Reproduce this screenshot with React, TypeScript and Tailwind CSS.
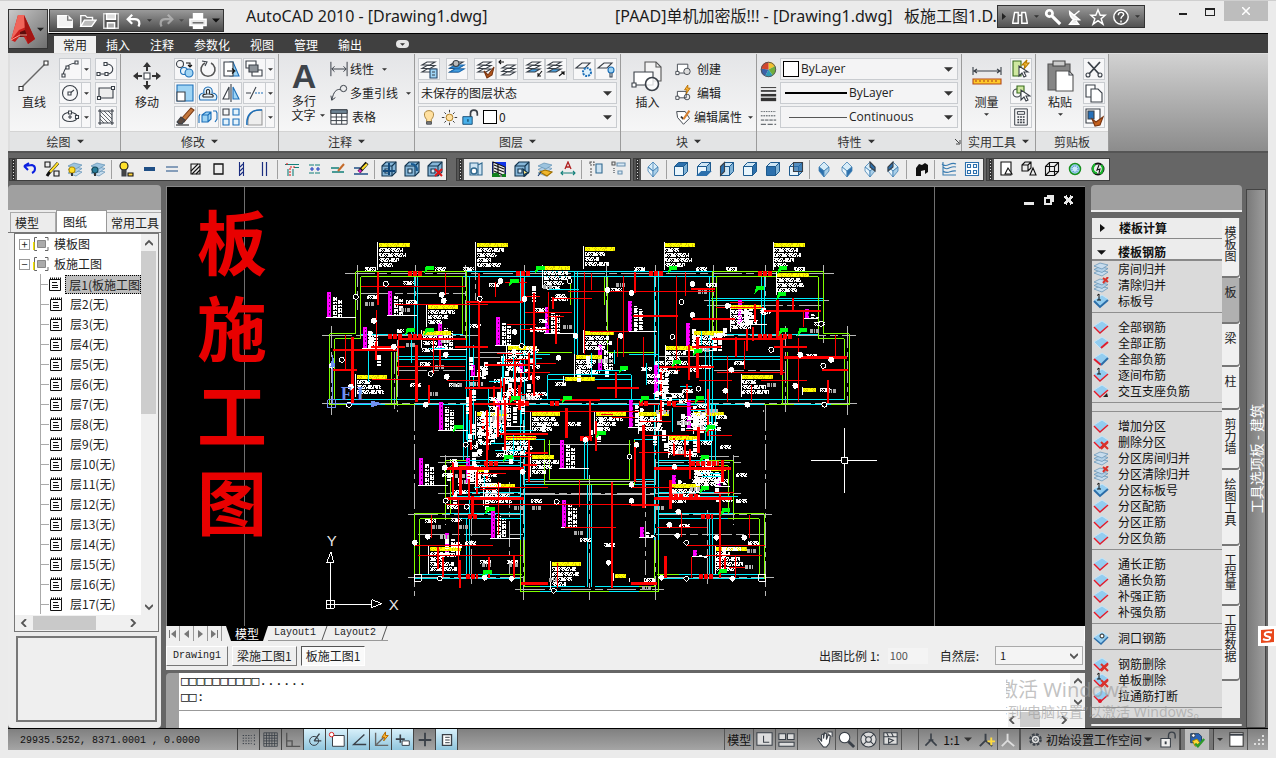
import React from "react";

type Kids = { children?: React.ReactNode };

/* ---------- shared primitives ---------- */

const Ic = ({ s = 20, v = 20, children }: Kids & { s?: number; v?: number }) => (
  <svg width={s} height={s} viewBox={`0 0 ${v} ${v}`} fill="none" stroke="#3a4048" strokeWidth="1.1" className="shrink-0" aria-hidden="true">
    {children}
  </svg>
);

const Caret = ({ w = 9, color = "#333" }: { w?: number; color?: string }) => (
  <svg width={w} height="5" viewBox="0 0 10 5" className="pointer-events-none shrink-0" aria-hidden="true">
    <path d="M0 0h10L5 5z" fill={color} />
  </svg>
);

const Small = ({ label, children, caret }: Kids & { label: string; caret?: boolean }) => (
  <button aria-label={label} className="flex h-[22px] min-w-[22px] items-center justify-center border border-[#c9ccd0] bg-[#f7f7f8]">
    {children}
    {caret && (
      <span className="ml-px flex h-full w-[10px] items-center justify-center border-l border-[#c9ccd0]">
        <Caret w={5} />
      </span>
    )}
  </button>
);

const Big = ({ label, children, caret }: Kids & { label: string; caret?: boolean }) => (
  <button className="flex w-12 flex-col items-center text-[12px] leading-[15px]">
    <span className="flex h-9 items-center">{children}</span>
    <span>{label}</span>
    {caret && <span className="flex h-2 items-end"><Caret w={5} /></span>}
  </button>
);

const Panel = ({ title, children, width, caret = true, corner }: Kids & { title: string; width: string; caret?: boolean; corner?: boolean }) => (
  <section className={`${width} flex shrink-0 flex-col border-r border-[#9b9b9b] bg-gradient-to-b from-[#e4e5e7] to-[#fbfbfb]`}>
    <div className="flex h-[78px] gap-1 px-[3px] pt-1">{children}</div>
    <div className="flex h-5 items-center justify-center gap-1.5 border-t border-[#d4d4d4] bg-[#e3e4e5] text-[12px] text-[#333]">
      <span>{title}</span>
      {caret && <Caret w={7} />}
      {corner && <svg width="6" height="6" viewBox="0 0 6 6" stroke="#444" fill="none" className="-mr-20 ml-[74px]"><path d="M0 0l4 4M5 1v4H1" /></svg>}
    </div>
  </section>
);

const Combo = ({ label, value, children }: Kids & { label: string; value: string }) => (
  <div className="flex h-[22px] w-full items-center border border-[#c9ccd0] bg-[#f4f4f5] pr-1">
    {children}
    <select aria-label={label} defaultValue={value} className="min-w-0 flex-1 appearance-none bg-transparent pl-0.5 text-[12px] text-[#222] outline-none">
      <option>{value}</option>
    </select>
    <Caret w={9} />
  </div>
);

/* ---------- ribbon icons ---------- */

const B = "#1c6fb8";
const L = "#9fd4f4";

const Layers = ({ accent = "#fff" }: { accent?: string }) => (
  <>
    <path d="M3 13l5-3h8l-5 3z" fill={accent} />
    <path d="M3 9.500l5-3h8l-5 3z" fill="#fff" />
    <path d="M3 6l5-3h8l-5 3z" fill="#fff" />
  </>
);

function DrawPanel() {
  return (
    <Panel title="绘图" width="w-[111px]">
      <Big label="直线">
        <Ic s={32} v={32}><path d="M3 28L28 3" strokeWidth="1.500" stroke="#666" /><path d="M1 26.500h4v4H1zM26 1h4v4h-4z" fill="#fff" stroke="#333" /></Ic>
      </Big>
      <div className="grid grid-cols-[32px_22px] content-start gap-x-1 gap-y-0.5">
        <Small label="圆弧" caret><Ic s={20}><path d="M3 17C4 9 9 4 17 4" /><path d="M2 15h3v3H2zM6 7h3v3H6zM15 2h3v3h-3z" fill="#fff" /></Ic></Small>
        <Small label="多段线"><Ic><path d="M3 15h7M9 5c10-1 10 10 2 10" /><path d="M1 13.500h3v3H1zM9 13.500h3v3H9zM8 3.500h3v3H8z" fill="#fff" /></Ic></Small>
        <Small label="圆" caret><Ic><circle cx="10" cy="10" r="7.500" /><path d="M9 11l5-4" /><path d="M8 9h3v3H8z" fill="#fff" /></Ic></Small>
        <Small label="矩形"><Ic><path d="M3 5h14v10H3z" fill="#eee" /><path d="M1.500 13.500h3v3h-3zM15.500 3.500h3v3h-3z" fill="#fff" /></Ic></Small>
        <Small label="椭圆" caret><Ic><ellipse cx="10" cy="10" rx="7.500" ry="4.500" /><path d="M8 10h4M10 8v4" /><path d="M15.500 8.500h3v3h-3zM8.500 4h3v3h-3z" fill="#fff" /></Ic></Small>
        <Small label="图案填充"><Ic><path d="M4 2v16M16 2v16M2 4h16M2 16h16" /><path d="M4 8l8 8M4 12l4 4M4 4l12 12M8 4l8 8M12 4l4 4" strokeWidth=".8" /></Ic></Small>
      </div>
    </Panel>
  );
}

function ModifyPanel() {
  return (
    <Panel title="修改" width="w-[158px]">
      <Big label="移动">
        <Ic s={30} v={30}>
          <path d="M12 12h6v6h-6z" fill="#fff" />
          <path d="M15 1l4 5h-3v4h-2V6h-3zM15 29l4-5h-3v-4h-2v4h-3zM1 15l5-4v3h4v2H6v3zM29 15l-5-4v3h-4v2h4v3z" fill="#333" stroke="none" />
        </Ic>
      </Big>
      <div className="grid grid-cols-[22px_22px_22px_32px] content-start gap-x-px gap-y-0.5">
        <Small label="复制"><Ic><circle cx="5" cy="5" r="3.500" /><circle cx="9" cy="12" r="3.500" fill="#e4f3fc" stroke={B} /><circle cx="14" cy="14" r="4" fill={L} stroke={B} /><path d="M11 4h4v4M13 6l2 2 2-2" stroke="#111" /></Ic></Small>
        <Small label="旋转"><Ic><path d="M7 4a7 7 0 1 0 6 0" strokeWidth="1.600" stroke="#555" /><path d="M4 2l5 1-2 4" /></Ic></Small>
        <Small label="拉伸"><Ic><path d="M12 3l6 14H9V3z" fill={L} stroke={B} /><path d="M3 3h9v14H3z" fill="#fff" /><path d="M6 12h7M11 9.500l3 2.500-3 2.500" stroke="#111" /></Ic></Small>
        <Small label="前置" caret><Ic><path d="M2 2h10v7H2z" fill="#fff" /><path d="M8 11h10v6H8z" fill="#fff" /><path d="M5 6h9v7H5z" fill="#8d9399" /></Ic></Small>
        <Small label="缩放"><Ic><path d="M2 2h16v16H2z" fill={L} stroke={B} /><path d="M2 9h8v9H2z" fill="#fff" /></Ic></Small>
        <Small label="偏移"><Ic><path d="M2 17h16M2 17c-2-5 1-7 4-7-2-8 10-8 8 0 4 0 6 3 4 7z" stroke={B} fill="#e4f3fc" /><path d="M5 14h10M5 14c-1-3 2-3 4-3-3-6 5-6 2 0 3 0 5 1 4 3" stroke="#222" /></Ic></Small>
        <Small label="镜像"><Ic><path d="M8 4v12H2z" fill="#fff" /><path d="M12 4v12h6z" fill={L} stroke={B} /><path d="M10 1v18" /></Ic></Small>
        <Small label="修剪" caret><Ic><path d="M2 10h5M12 4L6 16" /><path d="M11 10h8" stroke={B} strokeDasharray="2 1" /></Ic></Small>
        <Small label="删除"><Ic><path d="M1 18h13" stroke="#222" /><path d="M6 12L16 1l3 2-10 12z" fill="#c4773c" stroke="#7a3b15" /><path d="M2 15l4-5 4 3-3 4H4z" fill="#5b4a40" /></Ic></Small>
        <Small label="分解"><Ic><path d="M4 8l4-3h5v7l-3 3H4zM4 8h6v7M10 8l3-3" fill={L} stroke={B} /><path d="M2 7l-1 2v7M15 4h3l1 2v6l-2 3" stroke={B} /></Ic></Small>
        <Small label="阵列"><Ic><path d="M2 2h6v6H2z" /><path d="M12 2h6v6h-6zM2 12h6v6H2zM12 12h6v6h-6z" stroke={B} fill="#e4f3fc" /></Ic></Small>
        <Small label="圆角" caret><Ic><path d="M4 18V14C4 8 8 3 15 3h3v15z" fill="#eee" stroke="#999" /><path d="M3 18C2 8 8 2 18 3" stroke={B} strokeWidth="1.500" /></Ic></Small>
      </div>
    </Panel>
  );
}

function AnnotatePanel() {
  return (
    <Panel title="注释" width="w-[136px]">
      <button className="flex w-11 flex-col items-center text-[12px] leading-[14px]">
        <span className="h-9 font-['Liberation_Sans',sans-serif] text-[34px] font-bold leading-9 text-[#3d434a]" aria-hidden="true">A</span>
        <span>多行</span>
        <span className="flex items-center gap-1 pl-2">文字<Caret w={5} /></span>
      </button>
      <div className="flex flex-1 flex-col gap-0.5 whitespace-nowrap text-[12px]">
        <button className="flex h-[22px] items-center gap-0.5"><Ic s={18}><path d="M1 2v16M19 2v16M2 10h16M5 7l-3 3 3 3M15 7l3 3-3 3" /></Ic>线性<span className="pl-1.5"><Caret w={5} /></span></button>
        <button className="flex h-[22px] items-center gap-0.5"><Ic s={18}><circle cx="15" cy="5" r="3.500" /><path d="M2 18C4 8 7 6 11 6M1 13l1 5 4-3" /></Ic>多重引线<span className="pl-1.5"><Caret w={5} /></span></button>
        <button className="flex h-[22px] items-center gap-1"><Ic s={18}><path d="M1 2h18v16H1z" fill="#fff" /><path d="M1 2h18v4H1z" fill="#6d8494" /><path d="M7 6v12M13 6v12M1 10h18M1 14h18" /></Ic>表格</button>
      </div>
    </Panel>
  );
}

function LayerPanel() {
  return (
    <Panel title="图层" width="w-[206px]">
      <div className="flex w-full flex-col gap-0.5">
        <div className="flex justify-between">
          <Small label="图层特性"><Ic><Layers /><path d="M11 10h7v9h-7z" fill={L} stroke="#246" /><path d="M13 13h3M13 16h3" /></Ic></Small>
          <Small label="置为当前"><Ic><Layers accent="#49a0de" /><path d="M3 9l5-3h9l-5 3zM3 13l5-3h9l-5 3z" fill="#49a0de" stroke={B} /><circle cx="9" cy="4.500" r="3" fill="#bbb" /></Ic></Small>
          <div className="flex"><Small label="匹配"><Ic><Layers /><path d="M9 12l4 4 6-8-2 8-5 3z" fill="#b5581d" stroke="#7a3510" /></Ic></Small><Small label="上一个"><Ic><g transform="translate(2 3)"><Layers /></g><path d="M7 3H2M4 1L2 3l2 2" stroke="#111" /></Ic></Small></div>
          <div className="flex"><Small label="隔离"><Ic><Layers accent="#49a0de" /><path d="M18 12l-4 5v-3M14 17h3" stroke="#111" /></Ic></Small><Small label="取消隔离"><Ic><g transform="translate(-1 0)"><Layers accent="#49a0de" /></g><path d="M13 17l5-4h-3M18 13v3" stroke="#111" /></Ic></Small></div>
          <div className="flex"><Small label="冻结"><Ic><path d="M2 9l6-5h8l-5 5z" /><circle cx="13" cy="13" r="4" stroke={B} strokeDasharray="2 1" strokeWidth="2" fill="#dff1fc" /></Ic></Small><Small label="关闭"><Ic><path d="M2 9l6-5h8l-5 5z" /><circle cx="15" cy="11" r="3" stroke={B} fill={L} /><path d="M14 14v4h2v-4" stroke="#345" /></Ic></Small></div>
        </div>
        <Combo label="图层状态" value="未保存的图层状态" />
        <Combo label="图层" value="0">
          <span className="flex items-center gap-1 pl-0.5">
            <Ic s={16}><path d="M7 13C3 9 3 2 10 2s7 7 3 11v3H7z" fill="#ffe0a0" stroke="#a07a30" /><path d="M7 16h6v3H7z" fill="#888" /></Ic>
            <Ic s={17}><circle cx="10" cy="10" r="4" fill="#ffe0a0" stroke="#a87920" /><path d="M10 1v3M10 16v3M1 10h3M16 10h3M4 4l2 2M14 14l2 2M16 4l-2 2M4 16l2-2" stroke="#333" /></Ic>
            <Ic s={17}><path d="M1 9h11v9H1z" fill="#49b0ea" stroke="#174e78" /><path d="M10 9V5c0-5 8-5 8 0v3" strokeWidth="2" /><path d="M7 12v3" stroke="#023" /></Ic>
            <span className="h-3.5 w-3.5 border border-black bg-white" />
          </span>
        </Combo>
      </div>
    </Panel>
  );
}

function BlockPanel() {
  return (
    <Panel title="块" width="w-[136px]">
      <Big label="插入"><Ic s={32} v={32}><path d="M14 2h11l5 5v14H14z" fill="#f3f3f3" stroke="#555" /><path d="M25 2v5h5" stroke="#555" /><path d="M3 12h19v13H3z" fill="#fff" /><circle cx="21" cy="24" r="6.500" fill="#fffc" strokeWidth="1.600" /><path d="M1 23h4v4H1z" fill="#fff" /></Ic></Big>
      <div className="flex flex-col gap-0.5 whitespace-nowrap text-[12px]">
        <button className="flex h-[22px] items-center gap-1.5"><Ic s={16}><path d="M3 4h13v11H3z" fill="#fff" /><circle cx="15" cy="13" r="4" fill="#ddd" /><path d="M1 13h4v4H1z" fill="#fff" /></Ic>创建</button>
        <button className="flex h-[22px] items-center gap-1.5"><Ic s={16}><path d="M3 8h11v8H3z" fill="#fff" /><circle cx="15" cy="15" r="3.500" /><path d="M1 14h4v4H1z" fill="#fff" /><path d="M16 0l-4 6h3l-1 5 5-7h-3z" fill="#ffb733" stroke="#b36b00" /></Ic>编辑</button>
        <button className="flex h-[22px] items-center gap-0.5"><Ic s={17}><path d="M2 3l10 0 5 8-7 7-7-8z" fill="#fff" /><path d="M7 9l3 3" stroke="#333" strokeWidth="2" /><path d="M10 12l7-10" stroke="#d98332" strokeWidth="2.500" /></Ic>编辑属性<span className="pl-1"><Caret w={5} /></span></button>
      </div>
    </Panel>
  );
}

function PropertiesPanel() {
  return (
    <Panel title="特性" width="w-[205px]" corner>
      <div className="flex w-4 shrink-0 flex-col gap-0.5">
        <span className="flex h-[22px] items-center"><Ic s={17}><g stroke="none"><path d="M10 10V1a9 9 0 0 1 8 5z" fill="#f2c12e" /><path d="M10 10l8-4a9 9 0 0 1-3 11z" fill="#6fae3d" /><path d="M10 10l5 7a9 9 0 0 1-9 1z" fill="#2f9bb5" /><path d="M10 10l-4 8a9 9 0 0 1-5-9z" fill="#3a62a8" /><path d="M10 10L1 9a9 9 0 0 1 9-8z" fill="#d2452c" /></g><circle cx="10" cy="10" r="8.500" stroke="#555" /></Ic></span>
        <span className="flex h-[22px] items-center"><Ic s={17}><g stroke="#333"><path d="M1 3h18" /><path d="M1 7h18" strokeWidth="2" /><path d="M1 12h18" strokeWidth="3" /><path d="M1 17h18" strokeWidth="4" /></g></Ic></span>
        <span className="flex h-[22px] items-center"><Ic s={17}><path d="M1 3h18" strokeDasharray="1 1" /><path d="M1 8h18" strokeDasharray="2 1" /><path d="M1 13h18" strokeDasharray="4 1" /><path d="M1 18h18" strokeDasharray="6 2" /></Ic></span>
      </div>
      <div className="flex min-w-0 flex-1 flex-col gap-0.5 font-['Open_Sans','Noto_Sans',sans-serif]">
        <Combo label="颜色" value="ByLayer"><span className="ml-0.5 h-4 w-4 border border-black bg-white" /></Combo>
        <Combo label="线宽" value="ByLayer"><span className="ml-1 h-0.5 w-[62px] bg-black" /></Combo>
        <Combo label="线型" value="Continuous"><span className="ml-2 h-px w-[58px] bg-[#555]" /></Combo>
      </div>
    </Panel>
  );
}

function UtilityPanels() {
  return (
    <>
      <Panel title="实用工具" width="w-[74px]">
        <Big label="测量" caret><Ic s={30} v={30}><path d="M1 6v8M29 6v8M2 10h26M5 8l-3 2 3 2M25 8l3 2-3 2" /><path d="M1 18h28v5H1z" fill="#ffc928" stroke="#b34a1a" /><path d="M4 19v2M8 19v2M12 19v2M16 19v2M20 19v2M24 19v2" stroke="#b34a1a" /></Ic></Big>
        <div className="-ml-0.5 flex flex-col gap-0.5">
          <Small label="快速选择"><Ic><path d="M2 2h8v15H2z" fill="#cfe8a0" stroke="#386b1c" /><path d="M16 1l-5 5h3l-1 4 5-6h-3z" fill="#ffc03a" stroke="#b37a00" /><path d="M8 7v10l3-3 2 4 2-1-2-4h4z" fill="#fff" /></Ic></Small>
          <Small label="全部选择"><Ic><circle cx="6" cy="10" r="4" /><path d="M6 3h7v7H6z" fill="#cfe8a0" stroke="#386b1c" /><path d="M10 7v10l3-3 2 4 2-1-2-4h4z" fill="#fff" /></Ic></Small>
          <Small label="计算器"><Ic s={18}><path d="M3 1h14v18H3zM6 4h8v3H6z" /><path d="M6 10h8M6 13h8M6 16h8" strokeDasharray="2 1" strokeWidth="1.800" /></Ic></Small>
        </div>
      </Panel>
      <Panel title="剪贴板" width="w-[73px]" caret={false}>
        <Big label="粘贴" caret><Ic s={32} v={32}><path d="M4 4h22v26H4z" fill="#858585" stroke="#555" /><path d="M9 1h12v5H9z" fill="#ccc" stroke="#444" /><path d="M12 11h13l4 4v16H12z" fill="#fff" stroke="#555" /><path d="M25 11v4h4" /></Ic></Big>
        <div className="-ml-0.5 flex flex-col gap-0.5">
          <Small label="剪切"><Ic><path d="M4 3l11 12M16 3L5 15" strokeWidth="1.800" /><circle cx="4" cy="16" r="2" /><circle cx="16" cy="16" r="2" /></Ic></Small>
          <Small label="复制剪裁"><Ic><path d="M2 2h9v12H2z" fill="#fff" /><path d="M7 6h7l4 4v9H7z" fill="#fff" /></Ic></Small>
          <Small label="特性匹配"><Ic><path d="M2 2h14v14H2z" fill="#fff" /><path d="M4 4h6v8H4z" fill="#2670b8" /><path d="M8 12l4 3 7-5-3 8-5 1z" fill="#c4601d" stroke="#7a3510" /></Ic></Small>
        </div>
      </Panel>
    </>
  );
}

/* ---------- title bar ---------- */

const White = ({ children, s = 18 }: Kids & { s?: number }) => (
  <svg width={s} height={s} viewBox="0 0 20 20" fill="none" stroke="#fff" strokeWidth="1.600" className="shrink-0" aria-hidden="true">{children}</svg>
);

const tabs = ["常用", "插入", "注释", "参数化", "视图", "管理", "输出"];

function TitleBar() {
  return (
    <header className="flex h-[52px] shrink-0">
      <div className="w-[41px] shrink-0 bg-[linear-gradient(#ebebeb_32px,#404040_32px)] pt-2">
        <button aria-label="应用程序菜单" className="flex h-10 w-10 items-center border border-[#333] bg-gradient-to-br from-[#c9c9c9] to-[#6f6f6f]">
          <svg width="28" height="34" viewBox="0 0 28 34" aria-hidden="true">
            <path d="M9 3l6 0 11 24-7 5-4-7-5 0-4 5-4-2z" fill="#c91f1c" />
            <path d="M9 3l6 0 2 12-7 3-8 10z" fill="#f0655a" />
            <path d="M15 3l11 24-7 5-3-12z" fill="#a31513" />
            <path d="M11 20l5-2 2 6-7 1z" fill="#5d0d0c" />
            <path d="M2 28l9-5 7 0" stroke="#ff9a8a" fill="none" />
          </svg>
          <Caret w={7} color="#222" />
        </button>
      </div>
      <div className="flex min-w-0 flex-1 flex-col">
        <div className="flex h-8 items-start">
          <div className="mt-2 flex h-[23px] w-[175px] shrink-0 items-center gap-[5px] border border-[#333] bg-gradient-to-b from-[#9a9a9a] to-[#4c4c4c] px-1.5">
            <button aria-label="新建"><White><path d="M2 4h11l5 5v8H2z" fill="#f2f2f2" stroke="#fff" /><path d="M13 4v5h5" stroke="#777" /></White></button>
            <button aria-label="打开"><White><path d="M2 16V4h5l2 2h6v3" /><path d="M2 16l4-7h13l-5 7z" fill="#bbb" /></White></button>
            <button aria-label="保存"><White><path d="M2 2h16v16H2z" fill="#555" stroke="#ddd" /><path d="M5 2h10v6H5z" fill="#ddd" /><path d="M6 12h8v6H6z" fill="#aaa" /></White></button>
            <button aria-label="放弃" className="flex items-center gap-1"><White><path d="M8 3L3 8l5 5M3 8h8c5 0 6 4 4 8" strokeWidth="2.500" /></White><Caret w={5} /></button>
            <button aria-label="重做" className="flex items-center gap-1 opacity-60"><White><path d="M12 3l5 5-5 5M17 8H9c-5 0-6 4-4 8" strokeWidth="2.500" stroke="#ccc" /></White><Caret w={5} /></button>
            <button aria-label="打印"><White><path d="M5 8V2h10v6M5 14v4h10v-4" fill="#fff" /><path d="M1 8h18v7H1z" fill="#e8e8e8" /><path d="M4 12h12" stroke="#666" /></White></button>
            <button aria-label="自定义快速访问工具栏"><Caret w={8} color="#111" /></button>
          </div>
          <h1 className="ml-[22px] mt-[3px] flex min-w-0 flex-1 whitespace-nowrap font-['Noto_Sans','Noto_Sans_CJK_SC',sans-serif] text-[16px] leading-6 text-[#1c1c1c]">
            <span className="w-[369px] shrink-0">AutoCAD 2010 - [Drawing1.dwg]</span>
            <span className="w-[289px] shrink-0">[PAAD]单机加密版!!! - [Drawing1.dwg]</span>
            <span>板施工图1.D.</span>
          </h1>
          <div className="mt-1 flex h-[23px] w-[148px] shrink-0 items-center justify-between border border-[#333] bg-gradient-to-b from-[#9a9a9a] to-[#525252] px-1">
            <svg width="4" height="7" viewBox="0 0 4 7"><path d="M0 0l4 3.500L0 7z" fill="#222" /></svg>
            <button aria-label="搜索"><White><path d="M2 16l2-11h4v12H2zM12 5h4l2 11v1h-6zM8 8h4" fill="#666" /></White></button>
            <Caret w={5} />
            <button aria-label="速博"><White><circle cx="6" cy="6" r="3.500" strokeWidth="3" /><path d="M9 9l9 9" strokeWidth="3.500" /></White></button>
            <button aria-label="通讯中心"><White><path d="M4 4c0 7 4 10 11 9zM9 8l6-5M8 13l-4 5h10l-3-4" fill="#eee" /></White></button>
            <button aria-label="收藏夹"><White><path d="M10 2l2.500 6H18l-4.500 4 2 6-5.500-4-5.500 4 2-6L2 8h5.500z" /></White></button>
            <button aria-label="帮助"><White><circle cx="10" cy="10" r="8" fill="#555" /><path d="M7 8c0-4 6-4 6-1 0 2-3 2-3 5M10 14v2" /></White></button>
            <Caret w={5} />
          </div>
          <div className="flex shrink-0 items-start">
            <button aria-label="最小化" className="ml-6 flex h-5 w-7 items-center justify-center"><span className="mt-[5px] h-0.5 w-2 bg-[#222]" /></button>
            <button aria-label="最大化" className="mr-0.5 flex h-5 w-[25px] items-center justify-center"><span className="mt-px h-2 w-2.5 border border-t-2 border-[#222]" /></button>
            <button aria-label="关闭" className="flex h-5 w-11 items-center justify-center bg-[#bdbdbd]"><svg width="8" height="8" viewBox="0 0 8 8" stroke="#fff" strokeWidth="1.500"><path d="M0 0l8 8M8 0L0 8" /></svg></button>
          </div>
        </div>
        <nav className="flex h-5 items-end border-t border-black bg-[#404040] pl-[5px] text-[12px]">
          {tabs.map((t, i) => (
            <button key={t} className={i === 0 ? "h-[17px] bg-[#f0f0f0] px-[9px] leading-[14px] text-[#222]" : "h-[17px] px-2.5 leading-[14px] text-white"}>{t}</button>
          ))}
          <button aria-label="最小化功能区" className="mb-[5px] ml-6 flex h-2 w-[13px] items-center justify-center rounded-sm bg-[#e6e6e6]"><Caret w={5} /></button>
        </nav>
      </div>
    </header>
  );
}

/* ---------- tool bars ---------- */

const Cube = ({ top = "#cfe6f5", front = "#e9f5fc", side = "#7fb2d6" }: { top?: string; front?: string; side?: string }) => (
  <g stroke="#1d5a8e" strokeWidth="1"><path d="M1.500 5.500l4-4h9l-4 4z" fill={top} /><path d="M1.500 5.500h9v9h-9z" fill={front} /><path d="M10.500 5.500l4-4v9l-4 4z" fill={side} /></g>
);
const Gem = ({ a = "#e9f5fc", b = "#a9cfe8", c = "#d7ecf8" }: { a?: string; b?: string; c?: string }) => (
  <g stroke="#4282b4" strokeWidth=".8"><path d="M3 6l5-5 5 5-5 4z" fill={c} /><path d="M3 6l5 4v6l-5-6z" fill={a} /><path d="M13 6l-5 4v6l5-6z" fill={b} /></g>
);
const Stack = ({ top = "#9cc3de" }: { top?: string }) => (
  <g stroke="#5f8fb3" strokeWidth=".7"><path d="M1 12l6-3 8 2-6 4z" fill="#c7dced" /><path d="M1 8.500l6-3 8 2-6 4z" fill="#b3d0e6" /><path d="M1 5l6-3 8 2-6 4z" fill={top} /></g>
);
const BlueBox = ({ children }: Kids) => (
  <g stroke="#12344f"><path d="M1 5l4-4h10v10l-4 4H1z" fill="#86b6d8" /><path d="M1 5h10v10M11 5l4-4" /><path d="M4 8h4v4H4z" fill="#dcedf8" />{children}</g>
);

type Tool = [string, React.ReactNode] | null;
const D = "#1f4f86";

const editTools: Tool[] = [
  ["放弃", <path d="M3 5l8-1c4 1 4 6 0 8M3 5l5-3M3 5l4 4" stroke="#0a1fe0" strokeWidth="2" />],
  ["特性匹配", <><path d="M1 1h5v5H1zM10 10h5v5h-5z" stroke="#111" /><path d="M14 2L5 12l-2 3" stroke="#111" strokeWidth="3" /><path d="M14 2L6 11" stroke="#ffdf2b" strokeWidth="2" /></>],
  ["图层开", <><Stack /><circle cx="5" cy="9" r="3" fill="#ffdf2b" stroke="#b89000" /><path d="M4 12h2v3H4z" fill="#333" stroke="none" /></>],
  ["图层关", <><Stack /><circle cx="5" cy="9" r="3" fill="#2a7d9a" stroke="#134a5c" /><path d="M4 12h2v3H4z" fill="#333" stroke="none" /></>],
  null,
  ["灯", <><circle cx="6" cy="5" r="4" fill="#ffe12b" stroke="#111" /><path d="M4 9h4v6H4z" fill="#444" /><path d="M10 12h5v3h-5z" stroke="#111" fill="#ffd23a" /></>],
  ["粗线", <path d="M3 6h11v4H3z" fill={D} stroke="none" />],
  ["双线", <path d="M2 6h12M2 10h12" stroke={D} />],
  ["填充框", <><path d="M4 3h9v10H4z" stroke="#111" /><path d="M4 10l7-7M5 13l8-8M9 13l4-4" stroke="#111" /></>],
  ["框", <path d="M4 3h9v10H4z" stroke="#111" strokeWidth="1.300" />],
  ["墙", <><path d="M6.500 1v14M10.500 1v14" stroke="#1a2d80" /><path d="M7 6l3-3M7 10l3-3M7 14l3-3" stroke="#1a2d80" /></>],
  ["竖线", <path d="M6.500 1v14M10.500 1v14" stroke="#1a2d80" strokeWidth="1.200" />],
  null,
  ["梁角", <><path d="M1 3.500h14M10 6.500h5M9 8v7M4 8v7" stroke="#13807a" /><path d="M3 2v3M6 15V6h5" stroke="#e02020" strokeDasharray="2 1" /></>],
  ["梁", <><path d="M2 4h12M2 12h12" stroke="#13807a" strokeDasharray="5 1" /><path d="M5 6v4M11 6v4M3 8h4M9 8h4" stroke="#1f3fc0" /></>],
  ["绘制", <><path d="M1 7h8M2 11h12" stroke="#13807a" strokeWidth="1.300" /><path d="M14 3L8 10" stroke="#c46a2a" strokeWidth="2" /></>],
  ["擦除", <><path d="M1 7h6M1 13h14" stroke={D} strokeWidth="1.300" /><path d="M14 2L6 11" stroke="#111" strokeWidth="4" /><path d="M14 3l-5 5" stroke="#ffdf2b" strokeWidth="2" /><path d="M8 9l-2 2" stroke="#d428c0" strokeWidth="3" /></>],
  null,
  ["全部显示", <BlueBox><path d="M2 10h12M8 2v12" strokeWidth="2" stroke="#124a7c" /></BlueBox>],
  ["显示", <BlueBox><path d="M7 3c5 0 6 3 6 7" stroke="#175a91" strokeWidth="2" /></BlueBox>],
  ["删除显示", <BlueBox><path d="M8 8l7 7M15 8l-7 7" stroke="#e01818" strokeWidth="2" /></BlueBox>],
];
const blockTools: Tool[] = [
  ["块配置", <><path d="M2 2h8v12H2zM10 4l4-2v12h-4z" stroke="#31698f" fill="#cde3f2" /><circle cx="6" cy="10" r="3" stroke="#31698f" fill="#fff" strokeWidth="1.500" /></>],
  ["渲染", <><path d="M1 1h14v14H1z" fill="#1034e8" stroke="none" /><path d="M2 1l12 5v9H2z" fill="#eee" stroke="#111" /><path d="M3 4l10 4M3 7l10 4M3 10l9 4M7 3v11" stroke="#111" /><path d="M1 13c4-3 8 0 8 3H1zM11 13h4v3h-4z" fill="#12801e" stroke="none" /></>],
  ["拾取", <BlueBox><path d="M9 8l5 4-3 1-1 3z" fill="#ffe680" /></BlueBox>],
  ["图层栈", <><Stack /><path d="M3 11l5-2 7 2-5 4z" fill="#f0b62a" stroke="#a37100" /><path d="M1 15l3-4" stroke="#136" /></>],
  ["文字间距", <><path d="M5 8l3-7 3 7M6 6h4" stroke="#b02020" strokeWidth="1.300" /><path d="M1 12h14M3 10l-2 2 2 2M13 10l2 2-2 2" stroke="#13807a" /></>],
  null,
  ["复制属性", <><path d="M2 1h4v3H2zM3 7v8" stroke="#555" strokeDasharray="2 1" /><path d="M8 3h6v9H8z" stroke="#31698f" fill="#cde3f2" /></>],
  ["粘贴属性", <><path d="M1 1h3v3H1z" stroke="#555" /><path d="M6 2h8v3H6zM7 10h4v3H7z" stroke="#6a91b0" fill="#d8e8f4" /><path d="M3 7v5" strokeDasharray="1 1" /></>],
];
const K = "#2c70ad";
const viewTools: Tool[] = [
  ["视图", <><Gem /><path d="M8 1v9M8 10L3 6" stroke="#4282b4" strokeWidth=".8" /></>], null,
  ["俯视", <Cube top={K} />], ["仰视", <><Cube /><path d="M1.500 14.500l4-4h9l-4 4z" fill={K} stroke={K} /></>],
  ["左视", <><Cube front="#cfe6f5" /><path d="M1.500 5.500l4-4v9l-4 4z" fill={K} /></>], ["右视", <Cube side={K} />],
  ["前视", <Cube front={K} />], ["后视", <><Cube /><path d="M5.500 1.500h9v9h-9z" fill={K} fillOpacity=".75" /></>],
  null,
  ["西南等轴测", <Gem a={K} />], ["东南等轴测", <Gem b={K} />],
  ["东北等轴测", <><Gem /><path d="M8 1l5 5v4L8 6z" fill={K} /></>], ["西北等轴测", <><Gem /><path d="M8 1L3 6v4l5-4z" fill={K} /></>],
  null,
  ["相机", <path d="M3 15V7l3-4 3 1 3-2 3 2v7l-3 2V9l-4 1v5z" fill="#111" stroke="none" />],
  null,
  ["网格", <><path d="M2 1v13h13M1 3c5 5 8-3 14 0M2 6c5 5 7-2 13 0M2 10c5 4 7-1 13 0" stroke="#3a7cb0" /></>],
  ["视口", <path d="M1.500 1.500h13v13h-13zM3.500 3.500h3v3h-3zM9.500 3.500h3v3h-3zM3.500 9.500h3v3h-3zM9.500 9.500h3v3h-3z" stroke={K} fill="#fff" />],
];
const shadeTools: Tool[] = [
  ["二维线框", <><path d="M3 1h10v13H3z" stroke="#111" fill="#fff" /><path d="M7 13l3-6 4 6z" stroke="#111" fill="#fff" /></>],
  ["三维线框", <path d="M1 4l3-3h6v6l-3 3H1zM1 4h6v6M7 4l3-3M12 7l3 7h-6z" stroke="#111" />],
  ["三维隐藏", <path d="M1.500 5.500l4-4h9v9l-4 4h-9zM1.500 5.500h9v9M10.500 5.500l4-4M5.500 1.500v9l-4 4M5.500 10.500h9" stroke="#111" />],
  ["真实", <><circle cx="8" cy="8" r="5.500" fill="#9cd0f0" stroke="#18911f" strokeWidth="1.500" /><circle cx="8" cy="8" r="3" fill="#cfeafa" stroke="#4a8bc2" strokeDasharray="1 1" /></>],
  ["概念", <><circle cx="8" cy="8" r="5.500" fill="#eee" stroke="#111" strokeWidth="2" /><path d="M5 3c-4 4-2 9 2 9M11 4c3 2 2 7-1 9" stroke="#18b52a" strokeWidth="2" /><path d="M9 4L7 9l3-1-1 4" stroke="#111" /></>],
];

const Toolbar = ({ tools }: { tools: Tool[] }) => (
  <div className="flex h-[23px] shrink-0 items-stretch border border-[#3d3d3d] bg-[#ededed]">
    <span className="w-[7px] shrink-0 border-x-2 border-[#555] bg-[radial-gradient(#ddd_35%,#333_36%)] bg-[length:3px_3px]" />
    {tools.map((t, i) =>
      t ? (
        <button key={i} aria-label={t[0]} className="flex w-[23px] items-center justify-center"><Ic s={16} v={16}>{t[1]}</Ic></button>
      ) : (
        <span key={i} className="mx-0.5 my-px w-px bg-[#a0a0a0]" />
      )
    )}
  </div>
);

/* ---------- sheet tree ---------- */

const PageIcon = () => (
  <svg width="14" height="14" viewBox="0 0 14 14" className="shrink-0" aria-hidden="true"><path d="M1.500 2.500h11v11h-11z" fill="#fff" stroke="#111" /><path d="M2 1.500h11" stroke="#111" strokeDasharray="1 1" strokeWidth="2" /><path d="M4 5.500h5M4 8.500h6M4 10.500h6" stroke="#111" /></svg>
);
const GroupIcon = () => (
  <svg width="16" height="14" viewBox="0 0 16 14" className="shrink-0" aria-hidden="true"><path d="M4 .5H1.500v13H4M12 .5h3v3M15 10v3.500h-3" fill="none" stroke="#666" /><path d="M.5 5v8" stroke="#f5e400" strokeWidth="2" /><path d="M4.500 3.500h8v7h-8z" fill="#aaa" stroke="#888" /></svg>
);
const Chevron = ({ d }: { d: string }) => (
  <svg width="8" height="8" viewBox="0 0 8 8" fill="none" stroke="#555" strokeWidth="1.800" aria-hidden="true"><path d={d} /></svg>
);

const floors = Array.from({ length: 17 }, (_, i) => (i === 0 ? "层1(板施工图" : `层${i + 1}(无)`));

function SheetPanel() {
  return (
    <aside className="flex w-[153px] shrink-0 flex-col">
      <div className="h-[25px] rounded-t bg-[#a0a0a0] pl-[3px] pt-[3px]"><div className="h-3 w-1 bg-[radial-gradient(#333_35%,transparent_36%)] bg-[length:2px_2px]" /></div>
      <div className="flex min-h-0 flex-1 flex-col rounded-b bg-[#ececec] pb-1">
        <div className="flex h-[23px] items-end overflow-hidden border-b border-[#777] pl-0.5 text-[12px]">
          <button className="h-5 w-[46px] shrink-0 border border-b-0 border-[#aaa] pl-1 text-left">模型</button>
          <button className="h-[22px] w-[51px] shrink-0 border border-b-0 border-[#999] bg-white pl-1.5 text-left leading-[18px]">图纸</button>
          <button className="h-5 flex-1 whitespace-nowrap border-t border-[#aaa] pl-1 text-left">常用工具</button>
        </div>
        <div className="ml-1.5 mr-0.5 flex min-h-0 flex-1 flex-col border border-[#777] bg-[#f0f0f0]">
          <div className="flex min-h-0 flex-1">
            <ul className="min-w-0 flex-1 overflow-hidden whitespace-nowrap bg-white text-[12px] leading-5 font-['Noto_Sans_CJK_SC','Liberation_Sans',sans-serif]">
              {["模板图", "板施工图"].map((t, i) => (
                <li key={t} className="flex h-5 items-center gap-[3px] pl-1">
                  <button className="flex h-[11px] w-[11px] items-center justify-center border border-[#999] text-[11px] leading-none" aria-label={i ? "收起" : "展开"}>{i ? "−" : "+"}</button>
                  <GroupIcon />
                  <span className="pl-0.5">{t}</span>
                </li>
              ))}
              {floors.map((f, i) => (
                <li key={f} className="ml-[25px] flex h-5 items-center border-l border-[#aaa]">
                  <span className="w-2 border-t border-[#aaa]" />
                  <PageIcon />
                  <span className={i === 0 ? "ml-[3px] h-[19px] flex-1 border border-dotted border-black bg-[#bdbdbd] pl-[3px] leading-[17px]" : "pl-[7px]"}>{f}</span>
                </li>
              ))}
            </ul>
            <div className="flex w-[17px] shrink-0 flex-col items-center bg-[#f0f0f0] pr-0.5">
              <span className="flex h-[17px] items-center"><Chevron d="M0 6l4-4 4 4" /></span>
              <span className="h-[163px] w-full bg-[#cdcdcd]" />
              <span className="flex-1" />
              <span className="flex h-[17px] items-center"><Chevron d="M0 2l4 4 4-4" /></span>
            </div>
          </div>
          <div className="flex h-4 items-center pr-4">
            <span className="flex w-[18px] justify-center"><Chevron d="M6 0L2 4l4 4" /></span>
            <span className="h-3.5 w-[63px] bg-[#c9c9c9]" />
            <span className="flex-1" />
            <span className="flex w-[18px] justify-center"><Chevron d="M2 0l4 4-4 4" /></span>
          </div>
        </div>
        <div className="mb-0.5 ml-2 mr-1 mt-1 h-[86px] border-2 border-[#777] bg-[#efefef]" />
      </div>
    </aside>
  );
}

/* ---------- structural drawing ---------- */

const yellow: [number, number, number, number][] = [
  [379, 245, 31, 4], [477, 245, 31, 4], [585, 249, 30, 3], [666, 245, 30, 4], [775, 245, 31, 4], [428, 307, 30, 3], [423, 333, 28, 2],
  [357, 377, 30, 3], [544, 268, 26, 3], [508, 348, 29, 3], [576, 357, 26, 3], [732, 307, 30, 4], [778, 275, 32, 3], [695, 333, 31, 3],
  [667, 348, 28, 3], [743, 377, 31, 3], [585, 333, 29, 3], [565, 379, 30, 0], [804, 390, 13, 0], [477, 414, 30, 4], [532, 414, 28, 3],
  [596, 414, 31, 3], [640, 414, 30, 3], [695, 414, 30, 3], [506, 438, 30, 3], [532, 457, 22, 3], [670, 438, 28, 3], [485, 486, 30, 3],
  [697, 469, 30, 3], [673, 486, 28, 3], [430, 549, 31, 4], [717, 549, 31, 4], [552, 564, 29, 4], [615, 576, 12, 0], [477, 470, 12, 3],
];
const magenta: [number, number, number][] = [
  [329, 292, 317], [390, 291, 315], [365, 327, 348], [440, 323, 349], [498, 317, 345], [547, 307, 333], [631, 301, 331], [689, 323, 350],
  [600, 345, 370], [657, 365, 393], [741, 300, 324], [808, 309, 318], [441, 402, 430], [421, 458, 485], [632, 400, 427], [562, 440, 468],
  [564, 500, 527], [493, 511, 538], [447, 533, 555], [643, 527, 537], [498, 398, 426], [690, 400, 428], [468, 458, 483], [675, 475, 486],
  [696, 550, 556], [720, 478, 486], [473, 365, 376], [521, 363, 372],
];
const tags: [number, number][] = [
  [426, 268], [511, 281], [407, 330], [426, 330], [537, 268], [512, 398], [564, 398], [670, 268], [780, 268], [757, 288], [779, 294],
  [781, 330], [800, 330], [621, 368], [674, 362], [695, 351], [642, 398], [697, 398], [455, 427], [598, 433], [505, 457], [487, 509],
  [708, 427], [702, 457], [702, 488], [723, 510], [484, 572], [720, 571],
];
const circles: [number, number][] = [
  [386, 284], [442, 295], [444, 301], [356, 297], [374, 321], [394, 347], [342, 360], [332, 366], [351, 387], [349, 405], [426, 405], [446, 355],
  [431, 374], [447, 377], [501, 281], [480, 299], [525, 299], [559, 358], [570, 281], [608, 290], [632, 293], [682, 302], [693, 284], [693, 315],
  [673, 337], [621, 336], [728, 306], [822, 324], [801, 355], [832, 360], [772, 350], [726, 391], [732, 370], [824, 366], [796, 386], [748, 405],
  [825, 405], [480, 452], [586, 440], [630, 457], [637, 445], [445, 468], [446, 501], [415, 543], [428, 537], [440, 579], [485, 578], [512, 579],
  [554, 591], [609, 563], [632, 501], [557, 502], [670, 525], [678, 536], [687, 543], [717, 538], [745, 538], [687, 579], [733, 579], [662, 578],
  [467, 507], [675, 467], [679, 512], [522, 346], [515, 332], [576, 336], [699, 389], [632, 485], [523, 472], [466, 445],
];
const redH: [number, number, number, number][] = [
  [361, 287, 465, 1], [333, 350, 397, 2], [333, 370, 357, 2], [395, 305, 488, 1], [371, 347, 405, 2], [398, 339, 466, 2], [397, 367, 465, 1],
  [372, 380, 415, 1], [447, 381, 480, 1], [455, 347, 488, 2], [466, 302, 523, 2], [505, 283, 527, 1], [507, 325, 536, 1], [525, 313, 572, 1],
  [465, 388, 500, 2], [485, 365, 530, 2], [524, 373, 550, 1], [568, 292, 716, 1], [554, 299, 592, 1], [634, 316, 679, 2], [693, 319, 736, 2],
  [692, 289, 716, 2], [717, 308, 765, 1], [765, 311, 822, 2], [713, 339, 786, 2], [775, 347, 808, 2], [785, 358, 848, 3], [823, 370, 849, 2],
  [660, 367, 715, 2], [718, 373, 786, 1], [762, 381, 808, 1], [590, 332, 630, 1], [693, 347, 722, 2], [700, 381, 733, 1], [560, 400, 600, 2],
  [597, 388, 640, 2], [500, 434, 548, 2], [525, 453, 548, 2], [446, 469, 524, 3], [446, 499, 524, 3], [480, 488, 548, 1], [446, 505, 548, 1],
  [523, 505, 634, 1], [632, 505, 660, 2], [655, 469, 732, 3], [655, 499, 733, 3], [632, 488, 675, 1], [565, 528, 616, 1], [415, 546, 493, 1],
  [418, 556, 523, 1], [687, 546, 766, 1], [707, 556, 763, 1], [521, 584, 548, 3], [632, 584, 658, 3], [658, 528, 708, 1], [525, 412, 640, 1],
  [641, 422, 672, 1], [645, 436, 690, 1], [640, 453, 671, 1], [474, 404, 525, 2], [523, 465, 537, 2],
];
const redV: [number, number, number, number][] = [
  [378, 272, 305, 2], [377, 310, 359, 1], [346, 335, 370, 1], [353, 337, 403, 3], [417, 345, 402, 3], [399, 340, 376, 1], [434, 340, 374, 1],
  [429, 385, 403, 2], [446, 273, 295, 1], [479, 273, 388, 2], [496, 282, 297, 1], [534, 293, 396, 2], [549, 292, 325, 1], [523, 278, 301, 3],
  [585, 272, 354, 1], [592, 273, 290, 1], [624, 276, 357, 1], [636, 272, 293, 2], [618, 338, 357, 1], [644, 337, 367, 1], [677, 276, 369, 1],
  [686, 272, 296, 1], [778, 300, 338, 4], [794, 298, 311, 2], [804, 311, 327, 1], [836, 335, 358, 1], [799, 338, 402, 1], [829, 380, 403, 2],
  [752, 385, 402, 1], [728, 356, 402, 1], [737, 337, 357, 2], [782, 340, 375, 3], [745, 341, 369, 1], [698, 337, 378, 3], [709, 389, 415, 2],
  [471, 390, 420, 3], [515, 362, 402, 2], [529, 362, 380, 2], [461, 466, 495, 3], [487, 410, 463, 2], [567, 408, 438, 3], [529, 440, 482, 2],
  [612, 482, 588, 2], [580, 480, 507, 1], [499, 482, 535, 1], [473, 496, 516, 3], [459, 497, 578, 1], [443, 557, 577, 2], [489, 557, 578, 2],
  [514, 556, 578, 2], [558, 563, 588, 1], [432, 515, 538, 1], [666, 556, 578, 3], [692, 557, 578, 1], [721, 494, 578, 2], [750, 515, 538, 1],
  [682, 513, 537, 1], [736, 556, 578, 1], [644, 425, 508, 3], [671, 480, 509, 3], [699, 427, 453, 3], [723, 460, 482, 3], [636, 442, 482, 2],
  [590, 400, 440, 2], [662, 400, 420, 2], [690, 345, 380, 2], [505, 400, 450, 2], [520, 385, 410, 3],
];

/* small deterministic noise source for the congested bays */
function noise(seed: number) {
  let s = seed;
  return () => {
    s = (s * 16807) % 2147483647;
    return s / 2147483647;
  };
}
const bays: [number, number, number, number, number][] = [
  [468, 350, 50, 50, 30], [500, 345, 36, 60, 34], [576, 350, 40, 25, 10], [640, 360, 60, 45, 26], [468, 405, 50, 55, 40], [448, 455, 40, 48, 26],
  [656, 405, 56, 55, 40], [690, 462, 36, 40, 18], [365, 330, 80, 26, 12], [690, 300, 80, 40, 12], [520, 275, 36, 60, 12], [420, 535, 40, 35, 6],
  [722, 545, 26, 25, 5], [540, 400, 80, 30, 8],
];
const rnd = noise(4711);
const clutter = bays.flatMap(([x, y, w, h, n]) =>
  Array.from({ length: n }, () => {
    const px = Math.round(x + rnd() * w);
    const py = Math.round(y + rnd() * h);
    const len = Math.round(6 + rnd() * 11);
    return { px, py, len, up: rnd() > 0.45, kind: rnd() };
  })
);

const half = "M356 334V272H467V340M361 338V277H463V334M330 405V334H356M335 400V339H361M330 405H348M385 405H415M392 352V405M397 352V405M415 579V514H446M420 575V519H451M446 514V461H470M451 514V466H470M500 575H522M521 540V592H540M525 540V587H540M571 592H590M545 440V485H590M550 440V480H590M446 461H470";
const cyanHalf = "M361 272H590M361 277H590M415 277V335M418 277V335M467 272V440M470 277V440M474 345V440M521 272V400M525 277V400M335 400H590M335 405H590M397 357H467M397 360H467M463 335H361M521 355H550M525 405V440M521 405V505M525 440H545M451 493H521M451 497H521M470 461H521M470 466H521M420 514H521M420 519H521M415 575H521M415 579H521M521 440V592M525 440V587M525 480H545M525 485H545M470 514V575M467 519V575M525 587H585M525 592H590M464 460V405M468 460V405M548 375H590M548 380H590M548 375V400";

function Glyphs({ x, y, w, c }: { x: number; y: number; w: number; c: string }) {
  const o = (x * 7 + y * 13) % 17;
  return (
    <g stroke={c} fill="none">
      <path d={`M${x} ${y - 1.500}h${w}`} strokeDasharray="4 1 7 1 2 1 5 1 3 2" strokeDashoffset={o} />
      <path d={`M${x} ${y - .5}h${w}`} strokeDasharray="1 1 3 1 2 1 1 2 4 1" strokeDashoffset={o + 2} />
      <path d={`M${x} ${y + .5}h${w}`} strokeDasharray="5 1 2 1 3 1 1 1" strokeDashoffset={o + 5} />
      <path d={`M${x} ${y + 1.500}h${w}`} strokeDasharray="2 1 4 1 1 1 6 2" strokeDashoffset={o + 1} />
    </g>
  );
}

function Plan() {
  return (
    <svg className="block h-full w-full" viewBox="167 187 919 439" preserveAspectRatio="xMinYMin meet" shapeRendering="crispEdges" fill="none" role="img" aria-label="板施工图">
      <path d="M244.500 186V626M935.500 186V626" stroke="#707070" />
      <g fill="#e80000" fontFamily="'Noto Sans CJK SC',sans-serif" fontWeight="700" fontSize="70" textAnchor="middle">
        <text x="232" y="270">板</text>
        <text x="232" y="356">施</text>
        <text x="232" y="443">工</text>
        <text x="232" y="530">图</text>
      </g>
      <g stroke="#b8b8b8" strokeWidth="1">
        <path d="M358 265V310M416 265V300M466 265V340M476 258V300M525 265V300M607 265V330M656 265V380M714 265V345M766 265V300M824 265V343M848 326V415M332 326V415M398 340V412M786 326V412M395 352V412M764 410V412" strokeDasharray="22 4 5 4" />
        <path d="M415 405V598M766 405V598M446 455V525M734 455V525M524 420V600M656 420V600M590 475V600M472 510V587M708 510V587M510 482V575M646 482V575" strokeDasharray="26 4 5 4" />
        <path d="M345 274H835M322 336H478M705 336H857M322 404H860M440 457H480M700 457H740M408 515H523M660 515H773M408 578H523M660 578H775M515 590H665M361 294H465M708 306H822M397 371H465M715 371H785M525 494H655M438 463H525M655 463H742M438 494H525M655 494H742M418 535H523M657 535H765" strokeDasharray="30 4 8 4" />
        <path d="M548 445H632M526 482H655M705 301H830M525 400H655M480 353H520M660 357H720M500 358H470M520 495H655" />
      </g>
      <g strokeWidth="1">
        <path d={cyanHalf} stroke="#00f0ff" />
        <path d={cyanHalf} stroke="#00f0ff" transform="matrix(-1 0 0 1 1180 0)" />
        <path d="M585 440V480M588 440V480M588 485V587M592 485V587M575 272V355M578 272V355M712 299H824M712 301H824" stroke="#00f0ff" />
        <path d={half} stroke="#7fff00" />
        <path d={half} stroke="#7fff00" transform="matrix(-1 0 0 1 1180 0)" />
        <path d="M571 277V305M605 277V305M608 277V352M536 353H572M608 353H655" stroke="#7fff00" />
      </g>
      {magenta.map(([x, a, b], i) => (
        <g key={`m${i}`}>
          <path d={`M${x} ${a}V${b}`} stroke="#ff00ff" strokeWidth="4" />
          <path d={`M${x + 1} ${a + 2}V${b}`} stroke="#5a005a" strokeDasharray="1 2 2 3" />
          <path d={`M${x + 6} ${a + 5}V${b}M${x + 11} ${a + 8}V${b}`} stroke="#fff" strokeWidth="4" strokeDasharray="4 1 2 1 5 1" strokeDashoffset={i} />
          <path d={`M${x + 7} ${a + 5}V${b}M${x + 12} ${a + 8}V${b}`} stroke="#000" strokeDasharray="1 2 2 1" />
          <path d={`M${x - 3} ${b + 1}h${b - a > 12 ? 30 : 14}`} stroke="#fff" />
        </g>
      ))}
      {yellow.map(([x, y, w, n], i) => (
        <g key={`y${i}`}>
          <path d={`M${x - 1} ${y - 3}v${n * 5 + 8}`} stroke="#fff" />
          <path d={`M${x} ${y}h${w}`} stroke="#d8c800" strokeWidth="4" />
          <Glyphs x={x} y={y} w={w} c="#ff0" />
          {Array.from({ length: n }, (_, k) => (
            <Glyphs key={k} x={x} y={y + 5 * (k + 1)} w={[24, 27, 20, 14][(k + i) % 4]} c="#fff" />
          ))}
        </g>
      ))}
      {clutter.map((c, i) => {
        if (c.kind < 0.6) return c.up
          ? <path key={i} d={`M${c.px} ${c.py}v${c.len}`} stroke="#fff" strokeWidth="4" strokeDasharray="5 1 2 1 4 1" />
          : <Glyphs key={i} x={c.px} y={c.py} w={c.len} c="#fff" />;
        if (c.kind < 0.8) return <path key={i} d={`M${c.px} ${c.py}${c.up ? "v" : "h"}${c.len * 2}`} stroke="#f00" strokeWidth={c.up ? 2 : 1} />;
        if (c.kind < 0.88) return <path key={i} d={`M${c.px} ${c.py}h${c.len}`} stroke="#bbb" strokeWidth="4" strokeDasharray="3 1 2 1" />;
        return <path key={i} d={`M${c.px} ${c.py}${c.up ? "h" : "v"}${c.len * 2}`} stroke="#00f0ff" />;
      })}
      {[[370, 269], [440, 269], [468, 269], [640, 269], [702, 269], [732, 269], [800, 269], [372, 297], [411, 302], [408, 283], [475, 326], [494, 285], [540, 310], [560, 296], [616, 290], [712, 285], [820, 324], [720, 335], [766, 312], [826, 390], [740, 363], [812, 356], [425, 364], [454, 385], [500, 402], [560, 384], [415, 385], [447, 475], [452, 507], [726, 447], [742, 475], [742, 501], [470, 543], [754, 543], [685, 526], [536, 501], [650, 580], [722, 417], [430, 521], [456, 520], [485, 562], [512, 562], [609, 545], [585, 540]].map(([x, y], i) => (
        <Glyphs key={`t${i}`} x={x - 5} y={y} w={11} c="#fff" />
      ))}
      {[[369, 304], [457, 385], [433, 394], [439, 367], [405, 310], [410, 345], [620, 285], [703, 292], [815, 331], [832, 391], [772, 385], [567, 327], [547, 287], [436, 527], [463, 527], [486, 565], [513, 565], [578, 533], [553, 580], [752, 551], [660, 508], [518, 508], [536, 508], [705, 350], [647, 588]].map(([x, y], i) => (
        <path key={`d${i}`} d={`M${x - 4} ${y}h9`} stroke="#aaa" strokeWidth="4" strokeDasharray="3 1 1 1" />
      ))}
      <path d={redH.map(([a, y, b]) => `M${a} ${y}H${b}`).join("")} stroke="#f00" />
      {redH.filter(r => r[3] > 1).map(([a, y, b, t], i) => <path key={`h${i}`} d={`M${a} ${y}H${b}`} stroke="#f00" strokeWidth={t} />)}
      {redV.map(([x, a, b, t], i) => <path key={`v${i}`} d={`M${x} ${a}V${b}`} stroke="#f00" strokeWidth={t > 2 ? 3 : t} />)}
      <path d="M408 274h14M516 274h15M650 274h14M759 274h14M388 337h15M408 337h14M759 337h14M779 337h14M520 404h10M550 404h10M640 404h10M668 404h10M484 464h14M692 464h14M468 517h10M702 517h12M466 577h12M700 577h14M580 439h12M708 464h12M670 497h14M690 497h10" stroke="#f00" strokeWidth="5" strokeDasharray="4 1" />
      {tags.map(([x, y], i) => (
        <path key={`g${i}`} d={`M${x} ${y - 2}h8v4h-6l-4 4 1-4z`} fill="#00ff14" />
      ))}
      {circles.map(([x, y], i) => (
        <circle key={`c${i}`} cx={x} cy={y} r="2.500" stroke="#fff" fill={i % 3 ? "#fff" : "#000"} />
      ))}
      {/* user origin of the inserted sheet */}
      <g stroke="#6f8ff0">
        <path d="M333 355V404M333 404H378M328 400h8v8h-8z" />
        <path d="M331 367l2-10 2 10zM372 401l9 3-9 3z" fill="#6f8ff0" />
        <text x="341 357" y="400" fontSize="18" fontWeight="700" fill="#6f8ff0" stroke="none" fontFamily="'Liberation Serif',serif">FI</text>
      </g>
      <g stroke="#fff">
        <path d="M414.500 574.500h7v7h-7zM759.500 574.500h7v7h-7zM630 582V578M327 563l4-11 3 11zM331 563V600M326.500 600.500h8v8h-8zM326 604.500h9M330.500 600v9M335 604.500h37M372 600l10 4-10 4z" />
        <path d="M812 460.500h66M845.500 428v65" />
        <path d="M842.500 457.500h6v6h-6z" fill="#000" />
      </g>
      <g fill="#e8e8e8" fontSize="15" fontFamily="'Liberation Sans',sans-serif">
        <text x="327" y="546">Y</text>
        <text x="389" y="610">X</text>
      </g>
      <g fill="#e8e8e8" stroke="#e8e8e8">
        <path d="M1025 202h10v3h-10z" stroke="none" />
        <path d="M1045.500 198.500h6v6h-6zM1048 196.500h6v6" fill="none" strokeWidth="2" />
        <path d="M1066 196l7 8M1073 196l-7 8" strokeWidth="3" />
      </g>
    </svg>
  );
}

/* ---------- work area ---------- */

const mono = "font-['Liberation_Mono','Noto_Sans_CJK_SC',monospace]";

function WorkArea() {
  return (
    <main className="flex min-w-0 flex-1 flex-col">
      <div className="h-[440px] overflow-hidden border-l border-t border-[#888] bg-black"><Plan /></div>
      <div className="flex h-[15px] items-stretch border-r border-white bg-[#efefef]">
        {["M8 0L3 4l5 4zM1 0h1v8H1z", "M7 0L2 4l5 4z", "M2 0l5 4-5 4z", "M1 0l5 4-5 4zM7 0h1v8H7z"].map(d => (
          <button key={d} aria-label="切换布局" className="flex w-3.5 items-center justify-center border-r border-[#999]"><svg width="9" height="8" viewBox="0 0 9 8" fill="#777"><path d={d} /></svg></button>
        ))}
        <button className="ml-1 w-[42px] bg-black text-center text-[12px] leading-3 text-white [clip-path:polygon(0_0,100%_0,88%_100%,12%_100%)]">模型</button>
        {["Layout1", "Layout2"].map(t => (
          <button key={t} className={`${mono} flex items-center border-b border-[#999] pl-1.5 text-[10px] leading-none`}>{t}<svg width="8" height="14" viewBox="0 0 8 14" stroke="#555" className="ml-1"><path d="M7 0L2 14" /></svg></button>
        ))}
      </div>
      <div className="flex h-[29px] items-center bg-[#efefef] pr-0.5 text-[12px]">
        {["Drawing1", "梁施工图1", "板施工图1"].map((t, i) => (
          <button key={t} className={i === 2 ? "ml-1 h-5 border border-b-white border-l-[#555] border-r-white border-t-[#555] bg-[#fafafa] px-1" : i === 0 ? `${mono} h-5 border border-b-[#777] border-r-[#777] border-l-white border-t-white px-1.5 text-[10px]` : "ml-1 h-5 border border-b-[#777] border-l-white border-r-[#777] border-t-white px-1"}>{t}</button>
        ))}
        <span className="flex-1" />
        <label htmlFor="scale">出图比例 1:</label>
        <input id="scale" defaultValue="100" className="ml-2 mr-3 h-4 w-10 bg-[#f4f4f4] px-0.5 text-[11px] text-[#555]" />
        <label htmlFor="floor">自然层:</label>
        <div className="ml-4 flex h-[19px] w-[88px] items-center border border-[#aaa] bg-[#f4f4f4] px-1">
          <select id="floor" defaultValue="1" className="flex-1 appearance-none bg-transparent text-[11px]"><option>1</option></select>
          <Chevron d="M0 2l4 4 4-4" />
        </div>
      </div>
      <div className="mt-[3px] flex min-h-0 flex-1">
        <div className="w-[13px] rounded-tl bg-[#a0a0a0] pl-px pt-0.5"><div className="h-1 w-3 bg-[radial-gradient(#333_35%,transparent_36%)] bg-[length:2px_2px]" /></div>
        <div className="flex min-w-0 flex-1 flex-col bg-white">
          <div className="flex flex-1 border-b border-[#999]">
            <div className="flex-1 pl-0.5 font-['DejaVu_Sans_Mono',monospace] text-[13px] leading-4">
              <p>□□□□□□□□□□......</p>
              <p>□□:</p>
            </div>
            <div className="flex w-[15px] flex-col items-center justify-between bg-[#f0f0f0] py-1"><Chevron d="M0 6l4-4 4 4" /><Chevron d="M0 2l4 4 4-4" /></div>
          </div>
          <div className="flex h-[17px] items-center">
            <input aria-label="命令行" className="h-4 flex-1 bg-transparent outline-none" />
            <div className="flex h-[15px] w-[77px] items-center bg-[#f0f0f0]"><Chevron d="M6 0L2 4l4 4" /><span className="ml-1 mr-5 h-[15px] w-5 bg-[#cdcdcd]" /><Chevron d="M2 0l4 4-4 4" /></div>
          </div>
        </div>
      </div>
    </main>
  );
}

/* ---------- tool palette ---------- */

type Kind = "stack" | "stackX" | "num" | "both" | "right" | "left" | "numRed" | "redX" | "numX" | "hole" | "low" | "corner";

function PalIcon({ k }: { k: Kind }) {
  const dia = <path d="M1 7l8-5 6 4-7 8z" fill="#93cdf0" stroke="#c5e5f8" />;
  return (
    <svg width="16" height="16" viewBox="0 0 16 16" fill="none" className="shrink-0" aria-hidden="true">
      {(k === "stack" || k === "stackX") ? <Stack top="#c7dced" /> : dia}
      {k === "num" && <path d="M1 8l6 6 8-7" stroke="#2b6da8" strokeWidth="2" />}
      {["both", "numRed", "redX", "numX", "low", "corner"].includes(k) && <path d="M1 8l6 6 8-7" stroke="#e01c2c" strokeWidth="1.500" />}
      {k === "right" && <path d="M8 13l7-6" stroke="#e01c2c" strokeWidth="2" />}
      {k === "left" && <><path d="M1 8l7 6" stroke="#e01c2c" strokeWidth="2" /><path d="M8 14l7-7" stroke="#2b6da8" strokeWidth="2" /></>}
      {k === "hole" && <><path d="M1 8l7 6 7-7" stroke="#2b6da8" strokeWidth="1.500" /><circle cx="9" cy="6" r="2" stroke="#222" fill="#fff" /></>}
      {["num", "numRed", "numX"].includes(k) && <path d="M4 2.500l2-1.500v6M4 7h4" stroke="#111" />}
      {["redX", "numX"].includes(k) && <path d="M8 8l7 7M15 8l-7 7" stroke="#d8322a" strokeWidth="2" />}
      {k === "stackX" && <path d="M10 1l5 4M15 0l-5 6" stroke="#d8322a" strokeWidth="2" />}
      {k === "corner" && <path d="M10 14h5l-1-4z" fill="#222" />}
      {k === "low" && <circle cx="7" cy="13" r="2" fill="#e01c2c" />}
    </svg>
  );
}

const groups: [string, Kind][][] = [
  [["房间归并", "stack"], ["清除归并", "stackX"], ["标板号", "num"]],
  [["全部钢筋", "both"], ["全部正筋", "right"], ["全部负筋", "left"], ["逐间布筋", "numRed"], ["交互支座负筋", "corner"]],
  [],
  [["增加分区", "both"], ["删除分区", "redX"], ["分区房间归并", "stack"], ["分区清除归并", "stackX"], ["分区标板号", "num"], ["分区配筋", "both"], ["分区正筋", "both"], ["分区负筋", "both"]],
  [["通长正筋", "both"], ["通长负筋", "both"], ["补强正筋", "both"], ["补强负筋", "both"]],
  [["洞口钢筋", "hole"]],
  [["钢筋删除", "redX"], ["单板删除", "numX"], ["拉通筋打断", "low"]],
];

const sideTabs: [string, string][] = [
  ["模板图", "h-[60px]"], ["板", "h-[46px]"], ["梁", "h-[43px]"], ["柱", "h-[43px]"], ["剪力墙", "h-[60px]"], ["绘图工具", "h-[76px]"], ["工程量", "h-[60px]"], ["工程数据", "h-[75px]"],
];

function Palette() {
  return (
    <aside className="flex w-[151px] shrink-0 flex-col">
      <div className="h-[27px] rounded-t border-b-2 border-[#eee] bg-[#a0a0a0] pl-[3px] pt-[3px]"><div className="h-3 w-1 bg-[radial-gradient(#333_35%,transparent_36%)] bg-[length:2px_2px]" /></div>
      <div className="mb-1.5 ml-px mr-0.5 mt-1.5 flex min-h-0 flex-1 bg-[#ececec]">
        <div className="flex min-w-0 flex-1 flex-col overflow-hidden bg-[#dadada] text-[12px] leading-4 text-[#111]">
          <button className="flex h-[21px] shrink-0 items-center gap-[14px] border-b border-[#888] bg-[#ececec] pl-2 font-bold"><svg width="5" height="8" viewBox="0 0 5 8"><path d="M0 0l5 4-5 4z" fill="#111" /></svg>楼板计算</button>
          <button className="flex h-[22px] shrink-0 items-end gap-[12px] border-b-2 border-[#888] bg-[#ececec] pl-[5px] font-bold leading-[15px]"><span className="mb-1"><Caret w={9} color="#111" /></span>楼板钢筋</button>
          {groups.map((g, i) => (
            <ul key={i} className={i === 0 ? "border-b border-[#8f8f8f] pb-[3px]" : i === 2 ? "h-[9px] border-b border-[#8f8f8f]" : "border-b border-[#8f8f8f] pb-[3px] pt-1.5"}>
              {g.map(([t, k]) => (
                <li key={t}><button className="flex h-4 items-center gap-[9px] whitespace-nowrap pl-px"><PalIcon k={k} />{t}</button></li>
              ))}
            </ul>
          ))}
        </div>
        <div className="flex w-[18px] shrink-0 flex-col text-[12px] leading-3">
          {sideTabs.map(([t, h], i) => (
            <button key={t} className={`${h} ${i === 1 ? "bg-[#b0b0b0]" : "bg-[#f0f0f0]"} flex shrink-0 justify-center rounded-br border-b-2 border-r border-[#777] px-[3px] pt-2 text-center`}>{t}</button>
          ))}
        </div>
      </div>
      <div className="mb-0.5 h-0.5 rounded bg-[#eee]" />
    </aside>
  );
}

/* ---------- status bar ---------- */

const toggles: [string, boolean, React.ReactNode][] = [
  ["捕捉", false, <path d="M3 5h10M3 8h10M3 11h10M3 14h10M16 4v8M16 14v2" strokeDasharray="1.500 1.500" />],
  ["栅格", false, <path d="M2 2h15v15H2zM5 2v15M8 2v15M11 2v15M14 2v15M2 5h15M2 8h15M2 11h15M2 14h15" strokeWidth=".9" />],
  ["正交", false, <path d="M3 2v15h15M3 11h6v6" stroke="#555" strokeWidth="1.500" />],
  ["极轴", true, <><circle cx="9" cy="11" r="5" /><path d="M9 11h8M9 11l6-8" strokeWidth="1.500" /></>],
  ["对象捕捉", true, <><path d="M5 5h13v12H5z" fill="#fff" /><circle cx="4" cy="4" r="2.500" stroke="#d22" fill="#fff" /></>],
  ["对象追踪", true, <path d="M16 4L4 15h14" strokeWidth="1.500" />],
  ["动态UCS", true, <><path d="M4 2v14h14M5 15L14 6" stroke="#666" strokeWidth="1.500" /><path d="M15 1l-4 6h3l-1 4 5-6h-3z" fill="#ffb733" stroke="#b36b00" /></>],
  ["动态输入", true, <><path d="M7 4v9M2 9h10" strokeWidth="1.800" /><path d="M9 11h8v5H9z" fill="#fff" /></>],
  ["线宽", false, <path d="M10 2v15M3 10h14" strokeWidth="2" />],
  ["快捷特性", true, <><path d="M5 4h10v12H5z" fill="#fff" strokeWidth="1.500" /><path d="M8 7h5M8 10h5M8 13h5" /></>],
];

const SIcon = ({ label, children }: Kids & { label: string }) => (
  <button aria-label={label} className="flex w-[22px] items-center justify-center border-r border-[#555]"><Ic s={19}>{children}</Ic></button>
);

function StatusBar() {
  return (
    <footer className="flex h-[22px] shrink-0 items-stretch border-t border-black bg-gradient-to-b from-[#808080] to-[#a5a5a5] text-[12px] text-[#111]">
      <span className={`${mono} w-[229px] whitespace-pre pl-3 text-[10px] leading-6`}>29935.5252, 8371.0001 , 0.0000</span>
      {toggles.map(([t, on, g]) => (
        <button key={t} aria-label={t} aria-pressed={on} className={on ? "flex w-[22px] items-center justify-center border-l border-[#444] bg-gradient-to-b from-[#d8f0fa] to-[#8fc5dd]" : "flex w-[22px] items-center justify-center border-l border-[#444]"}><Ic s={18}>{g}</Ic></button>
      ))}
      <span className="flex-1 border-l border-[#444]" />
      <button className="border-x border-[#555] px-0.5">模型</button>
      <SIcon label="快速查看布局"><path d="M2 3h16v13H2z" fill="#ddd" /><path d="M9 6v7h6" /></SIcon>
      <SIcon label="快速查看图形"><path d="M2 4h7v6H2zM11 4h7v6h-7zM2 13h16v4H2z" fill="#ddd" /></SIcon>
      <span className="w-4" />
      <SIcon label="平移"><path d="M3 9c2-1 3 1 4 3V5l2-1v5l1-6 2 1v6l2-5 2 1-1 8-3 4H9c-2-2-4-5-6-8zM13 2h5v5" fill="#fff" /></SIcon>
      <SIcon label="缩放"><circle cx="8" cy="8" r="5.500" fill="#fff" /><path d="M12 12l6 6" strokeWidth="3" /></SIcon>
      <SIcon label="控制盘"><circle cx="10" cy="10" r="8" fill="#ddd" /><circle cx="10" cy="10" r="3" /><path d="M4 4l4 4M16 4l-4 4M4 16l4-4M16 16l-4-4" /></SIcon>
      <SIcon label="ShowMotion"><path d="M3 3h14v12H3z" fill="#ddd" /><path d="M3 7h14M6 3l2 4M11 3l2 4M8 9l5 2-5 3z" /></SIcon>
      <span className="w-4" />
      <button aria-label="注释比例" className="flex items-center gap-1 border-l border-[#555] px-1"><Ic s={16}><path d="M10 2v8M3 17l7-7 7 7M7 10h6" strokeWidth="2" /></Ic>1:1<Caret w={8} /></button>
      <SIcon label="注释可见性"><path d="M9 4v7M3 17l6-6 7 6" strokeWidth="2" /><path d="M15 8v8M11 12h8" stroke="#ffdc3d" strokeWidth="2" /></SIcon>
      <SIcon label="自动缩放"><path d="M9 4v7M3 17l6-6 7 6" strokeWidth="2" stroke="#ddd" /></SIcon>
      <button className="flex items-center gap-0.5 whitespace-nowrap border-l border-[#555] px-1.5"><Ic s={17}><circle cx="10" cy="10" r="6" strokeWidth="3" strokeDasharray="3 1.700" /><circle cx="10" cy="10" r="5" fill="#ddd" /><circle cx="10" cy="10" r="2" /></Ic>初始设置工作空间<Caret w={8} /></button>
      <SIcon label="锁定"><path d="M2 9h10v9H2z" fill="#eee" /><path d="M10 9V6c0-5 7-5 7 0v3" strokeWidth="1.500" /><path d="M7 12v3" strokeWidth="2" /></SIcon>
      <span className="flex w-[34px] items-center justify-center border-x border-[#444] bg-[#777] px-1"><span className="flex h-full flex-1 items-center justify-center bg-[#bdbdbd]"><Ic s={18}><path d="M3 3h9l3 3v7H3z" fill="#2a63b5" stroke="#246" /><circle cx="6" cy="5" r="2" fill="#fff" /><path d="M5 11l5-2 3 4-5 4z" fill="#ffd83a" stroke="#a80" /><path d="M8 14l3 3 7-8" stroke="#2f9a2a" strokeWidth="2.500" /></Ic></span></span>
      <button aria-label="状态栏菜单" className="flex w-3 items-center justify-center"><Caret w={6} /></button>
      <SIcon label="全屏显示"><path d="M3 3h14v14H3z" fill="#fff" stroke="#333" /><path d="M3 5h14" strokeWidth="2" /></SIcon>
      <svg width="20" height="20" viewBox="0 0 20 20" fill="#ddd" aria-hidden="true"><path d="M14 6h2v2h-2zM10 10h2v2h-2zM14 10h2v2h-2zM6 14h2v2H6zM10 14h2v2h-2zM14 14h2v2h-2z" /></svg>
    </footer>
  );
}

export default function App() {
  return (
    <div className="relative flex min-h-screen flex-col overflow-hidden border-t border-[#cfcfcf] bg-[#ebebeb] px-2 pb-2 font-['Noto_Sans_CJK_SC','Noto_Sans',sans-serif] text-[12px] text-[#222]">
      <TitleBar />
      <div className="flex h-[98px] shrink-0 border-l-2 border-t border-[#dedede] bg-gradient-to-b from-[#d2d2d2] to-[#8c8c8c]">
        <DrawPanel />
        <ModifyPanel />
        <AnnotatePanel />
        <LayerPanel />
        <BlockPanel />
        <PropertiesPanel />
        <UtilityPanels />
      </div>
      <div className="flex h-[34px] shrink-0 items-center gap-0.5 overflow-hidden border-t-2 border-[#555] bg-[#666] pl-px">
        <Toolbar tools={editTools} />
        <span className="w-[5px]" />
        <Toolbar tools={blockTools} />
        <Toolbar tools={viewTools} />
        <Toolbar tools={shadeTools} />
      </div>
      <div className="flex min-h-0 flex-1 bg-[#666]">
        <SheetPanel />
        <div className="flex min-w-0 flex-1 pl-[5px] pr-1.5 pt-px"><WorkArea /></div>
        <Palette />
        <div className="ml-1 mr-0.5 mt-1 flex w-5 shrink-0 items-center justify-center border border-[#444] bg-gradient-to-r from-[#7a7a7a] to-[#9d9d9d] text-[14px] leading-none text-white">
          <span className="rotate-180 whitespace-nowrap [text-orientation:sideways] [writing-mode:vertical-rl]">工具选项板 - 建筑</span>
        </div>
      </div>
      <StatusBar />
      <div className="pointer-events-none absolute bottom-9 right-14 flex w-[214px] flex-col items-start overflow-hidden whitespace-nowrap font-['Noto_Sans','Noto_Sans_CJK_SC',sans-serif] text-[#9a9a9a]/60">
        <span className="-ml-2 text-[20px] leading-6">激活 Windows</span>
        <span className="-ml-3 text-[14px] leading-5">转到“电脑设置”以激活 Windows。</span>
      </div>
      <div className="absolute right-0 top-[625px] flex h-5 w-[18px] items-center justify-center bg-white">
        <svg width="14" height="16" viewBox="0 0 14 16" aria-hidden="true"><path d="M1 2l13-1v13l-13 1z" fill="#e8481c" /><path d="M12 4.500C7 3 4 5 5 7s6 1 5 3.500-5 1.500-7 .5" fill="none" stroke="#fff" strokeWidth="2" /></svg>
      </div>
    </div>
  );
}
